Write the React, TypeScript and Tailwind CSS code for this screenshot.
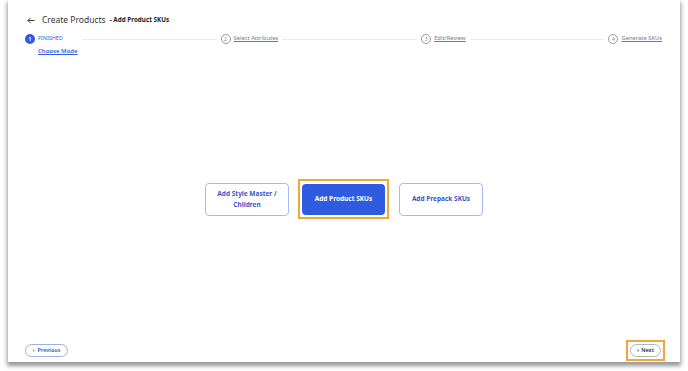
import React from "react";

const font = { fontFamily: '"Noto Sans", "Open Sans", sans-serif' };

function Circle({ n, active }: { n: number; active?: boolean }) {
  return active ? (
    <div className="w-[10px] h-[10px] rounded-full bg-[#2f5be0] text-white text-[5px] font-bold flex items-center justify-center leading-none">
      {n}
    </div>
  ) : (
    <div className="w-[10px] h-[10px] rounded-full border border-[#9a9a9a] text-[#8a8a8a] text-[5px] flex items-center justify-center leading-none">
      {n}
    </div>
  );
}

function Line() {
  return <div className="flex-1 h-px bg-[#ececec] mx-[4px]" />;
}

function Step({ n, label }: { n: number; label: string }) {
  return (
    <div className="flex items-center gap-[3px]">
      <Circle n={n} />
      <span className="text-[5.8px] text-[#7a7a7a] underline leading-none">{label}</span>
    </div>
  );
}

export default function App() {
  return (
    <div className="w-[688px] h-[371px] bg-white overflow-hidden" style={font}>
      <div className="ml-[8px] w-[672px] h-[362px] bg-white shadow-[0_3px_4px_1px_rgba(0,0,0,0.4)] flex flex-col">
        <div className="flex items-center pl-[19px] pt-[14px] h-[27px]">
          <svg width="8" height="7" viewBox="0 0 9 8" className="mr-[7px]">
            <path d="M8.5 4H1M4 1L1 4l3 3" fill="none" stroke="#333" strokeWidth="1.1" />
          </svg>
          <span className="text-[8.5px] text-[#333] leading-none">Create Products</span>
          <span className="text-[6.3px] font-bold text-[#222] leading-none ml-[4px]">- Add Product SKUs</span>
        </div>
        <div className="flex items-start pl-[17px] pr-[18px] pt-[7px]">
          <div className="flex flex-col">
            <div className="flex items-center gap-[3px]">
              <Circle n={1} active />
              <span className="text-[5.5px] text-[#2f5be0] leading-none">FINISHED</span>
            </div>
            <span className="text-[6px] text-[#2f5be0] font-semibold underline leading-none ml-[13px] mt-[4px]">
              Choose Mode
            </span>
          </div>
          <div className="flex-1 flex items-center h-[10px]">
            <Line />
            <Step n={2} label="Select Attributes" />
            <Line />
            <Step n={3} label="Edit/Review" />
            <Line />
            <Step n={4} label="Generate SKUs" />
          </div>
        </div>
        <div className="flex-1 flex items-center justify-center gap-[9px] pt-[4px]">
          <button className="w-[84px] h-[33px] rounded-[4px] border border-[#aab8ee] bg-white text-[#3a55c8] text-[6.5px] font-bold leading-[11px] px-[6px]">
            Add Style Master /<br />Children
          </button>
          <div className="border-2 border-[#f0a63c] p-[2px] mr-[1px]">
            <button className="w-[83px] h-[31px] rounded-[4px] bg-[#2f5be0] text-white text-[6.5px] font-bold">
              Add Product SKUs
            </button>
          </div>
          <button className="w-[84px] h-[33px] rounded-[4px] border border-[#aab8ee] bg-white text-[#3a55c8] text-[6.5px] font-bold">
            Add Prepack SKUs
          </button>
        </div>
        <div className="flex items-center justify-between pl-[17px] pr-[15px] pb-[1px] h-[22px]">
          <button className="h-[13px] w-[43px] rounded-full border border-[#9fb0e8] text-[#3a55c8] text-[5.5px] font-semibold flex items-center justify-center gap-[3px]">
            <span className="text-[6px]">‹</span>Previous
          </button>
          <div className="border-2 border-[#f0a63c] px-[2px] py-[2px]">
            <button className="h-[13px] w-[31px] rounded-full border border-[#b5b5b5] text-[#333] text-[5.5px] font-semibold flex items-center justify-center gap-[2px]">
              <span className="text-[6px]">›</span>Next
            </button>
          </div>
        </div>
      </div>
    </div>
  );
}
